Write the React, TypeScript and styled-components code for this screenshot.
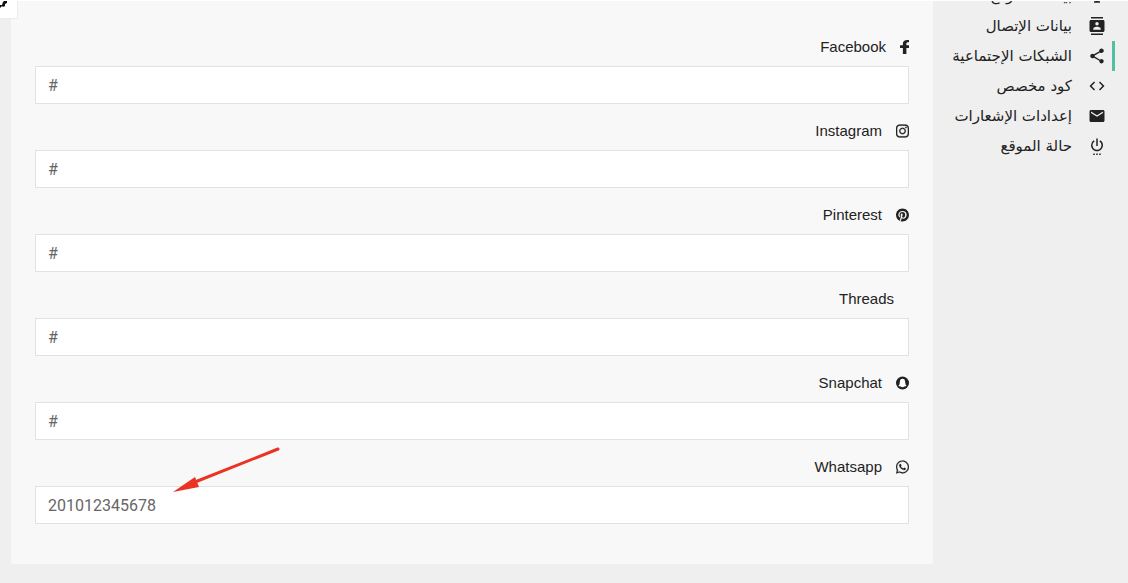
import React from "react";
import styled, { createGlobalStyle } from "styled-components";
import { FaFacebookF, FaInstagram, FaPinterest, FaWhatsapp } from "react-icons/fa";
import {
  MdCode,
  MdContacts,
  MdDesktopWindows,
  MdEmail,
  MdSettingsPower,
  MdShare,
} from "react-icons/md";

const GlobalStyle = createGlobalStyle`
  *, *::before, *::after { box-sizing: border-box; }
  body {
    margin: 0;
    background: #efefef;
    color: #222;
    font-family: "Liberation Sans", "DejaVu Sans", sans-serif;
  }
`;

const Page = styled.div`
  position: relative;
  display: flex;
  align-items: flex-start;
  min-height: 100vh;
  padding-left: 11px;
  border-top: 1px solid #fff;
  overflow: hidden;
`;

const Sidebar = styled.nav`
  flex: 0 0 195px;
  margin-top: -20px;
  padding-right: 13px;
`;

const NavItem = styled.a<{ $active?: boolean }>`
  display: flex;
  align-items: center;
  gap: 16px;
  height: 30px;
  padding-right: 6px;
  border-right: 3px solid ${(p) => (p.$active ? "#55bfa5" : "transparent")};
  color: #222;
  font-family: "DejaVu Sans", sans-serif;
  font-size: 15px;
  line-height: 28px;
  white-space: nowrap;
  text-decoration: none;

  svg {
    flex: none;
    width: 18px;
    height: 18px;
  }
`;

const Panel = styled.form`
  flex: 1;
  min-width: 0;
  padding: 36px 24px 40px;
  background: #f8f8f8;
`;

const Fields = styled.div`
  display: flex;
  flex-direction: column;
  gap: 17px;
`;

const Field = styled.div`
  position: relative;
  display: flex;
  flex-direction: column;
  gap: 9px;
`;

const FieldLabel = styled.label`
  display: flex;
  align-items: center;
  gap: 14px;
  height: 20px;
  font-size: 15px;
  line-height: 20px;
`;

const IconSlot = styled.span<{ $width: number }>`
  flex: none;
  display: flex;
  align-items: center;
  width: ${(p) => p.$width}px;
  height: 14px;

  svg {
    display: block;
    width: 100%;
    height: 100%;
  }
`;

const TextInput = styled.input`
  width: 100%;
  height: 38px;
  padding: 0 12px;
  border: 1px solid #e2e2e2;
  border-radius: 0;
  background: #fff;
  color: #666;
  font-family: Roboto, sans-serif;
  font-size: 16px;
  text-align: left;
  outline: none;
`;

const Arrow = styled.svg`
  position: absolute;
  left: 138px;
  top: -11px;
  width: 108px;
  height: 46px;
  pointer-events: none;
`;

const SettingsButton = styled.button`
  position: absolute;
  left: 0;
  top: 0;
  width: 18px;
  height: 18px;
  padding: 0;
  border: 1px solid #ececec;
  border-width: 0 1px 1px 0;
  background: #fff;

  svg {
    display: block;
    width: 17px;
    height: 17px;
  }
`;

const SnapchatIcon = () => (
  <svg viewBox="0 0 14 14" aria-hidden="true">
    <circle cx="7" cy="7" r="7" fill="#222" />
    <path
      d="M7 2.400C5.100 2.400 4.200 3.700 4.200 5.300V6.500L3.700 7 4 7.700C3.900 8.500 3.200 9.200 2.500 9.500L3.400 10.500 5 10.800C5.600 11.200 6.300 11.600 7 11.600S8.400 11.200 9 10.800L10.600 10.500 11.500 9.500C10.800 9.200 10.100 8.500 10 7.700L10.300 7 9.800 6.500V5.300C9.800 3.700 8.900 2.400 7 2.400Z"
      fill="#fff"
    />
  </svg>
);

const navItems = [
  { text: "بيانات الموقع", icon: <MdDesktopWindows /> },
  { text: "بيانات الإتصال", icon: <MdContacts /> },
  { text: "الشبكات الإجتماعية", icon: <MdShare />, active: true },
  { text: "كود مخصص", icon: <MdCode /> },
  { text: "إعدادات الإشعارات", icon: <MdEmail /> },
  { text: "حالة الموقع", icon: <MdSettingsPower /> },
];

const fields = [
  {
    id: "facebook",
    label: "Facebook",
    value: "#",
    width: 9,
    icon: <FaFacebookF viewBox="22 0 257 512" preserveAspectRatio="none" />,
  },
  {
    id: "instagram",
    label: "Instagram",
    value: "#",
    width: 13,
    icon: <FaInstagram viewBox="0 32 448 448" stroke="currentColor" strokeWidth="8" />,
  },
  { id: "pinterest", label: "Pinterest", value: "#", width: 13, icon: <FaPinterest viewBox="0 8 496 496" /> },
  { id: "threads", label: "Threads", value: "#", width: 1, icon: null },
  { id: "snapchat", label: "Snapchat", value: "#", width: 13, icon: <SnapchatIcon /> },
  {
    id: "whatsapp",
    label: "Whatsapp",
    value: "201012345678",
    width: 13,
    icon: <FaWhatsapp viewBox="0 32 448 448" stroke="currentColor" strokeWidth="8" />,
    marked: true,
  },
];

export default function App() {
  return (
    <>
      <GlobalStyle />
      <Page dir="rtl" lang="ar">
        <Sidebar>
          {navItems.map((item) => (
            <NavItem
              key={item.text}
              href="#"
              $active={item.active}
              aria-current={item.active ? "page" : undefined}
            >
              {item.icon}
              {item.text}
            </NavItem>
          ))}
        </Sidebar>
        <Panel>
          <Fields>
            {fields.map((field) => (
              <Field key={field.id}>
                <FieldLabel htmlFor={field.id}>
                  <IconSlot $width={field.width}>{field.icon}</IconSlot>
                  {field.label}
                </FieldLabel>
                <TextInput id={field.id} type="text" dir="ltr" defaultValue={field.value} />
                {field.marked && (
                  <Arrow viewBox="0 0 108 46" aria-hidden="true">
                    <path d="M22 36L105 3" stroke="#ea3323" strokeWidth="3" strokeLinecap="round" />
                    <path d="M0 46L22 31L26 41z" fill="#ea3323" />
                  </Arrow>
                )}
              </Field>
            ))}
          </Fields>
        </Panel>
        <SettingsButton type="button" aria-label="الإعدادات">
          <svg viewBox="0 0 17 17" aria-hidden="true">
            <path d="M0 4L2 4L3 1L4 0H7V2L5 3V5L3 6L2 5L0 7z" fill="#111" />
          </svg>
        </SettingsButton>
      </Page>
    </>
  );
}
